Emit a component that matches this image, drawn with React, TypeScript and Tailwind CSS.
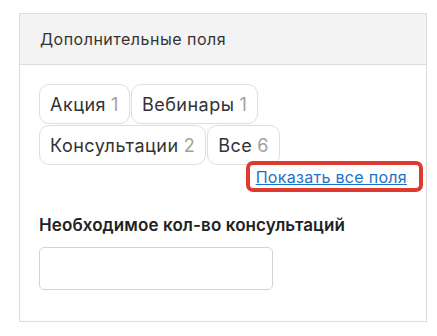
import React from "react";

const tags = [
  { name: "Акция", count: 1 },
  { name: "Вебинары", count: 1 },
  { name: "Консультации", count: 2 },
  { name: "Все", count: 6 },
];

export default function App() {
  return (
    <div className="min-h-screen bg-white pt-[13px] pl-[19px] pr-[10px] font-['Inter',sans-serif]">
      <div className="w-[408px] h-[309px] border border-[#dcdcdc] bg-white">
        <div className="h-[51px] flex items-center pl-[20px] bg-[#f3f3f3] border-b border-[#dcdcdc] text-[16px] tracking-[0.5px] text-[#333]">
          Дополнительные поля
        </div>

        <div className="pl-[19px] pr-[3px] pt-[19px]">
          <div className="flex flex-wrap gap-[1px] w-[262px]">
            {tags.map((t) => (
              <div
                key={t.name}
                className="h-[40px] flex items-center px-[10px] border border-[#dedede] rounded-[10px] text-[18px] text-[#333] tracking-[0.5px]"
              >
                {t.name}
                <span className="ml-[5px] text-[#a0a0a0]">{t.count}</span>
              </div>
            ))}
          </div>

          <div className="flex justify-end mt-[-4px]">
            <div className="border-[4px] border-[#e03a30] rounded-[7px] pl-[6px] pr-[12px] h-[31px] flex items-center">
              <a href="#" className="text-[16px] text-[#1a73c8] underline tracking-[0.3px]">
                Показать все поля
              </a>
            </div>
          </div>

          <div className="mt-[21px] text-[17px] font-semibold text-[#222] tracking-[0.1px]">
            Необходимое кол-во консультаций
          </div>
          <input
            type="text"
            className="mt-[8px] w-[234px] h-[43px] border border-[#d4d4d4] rounded-[5px] outline-none"
          />
        </div>
      </div>
    </div>
  );
}
